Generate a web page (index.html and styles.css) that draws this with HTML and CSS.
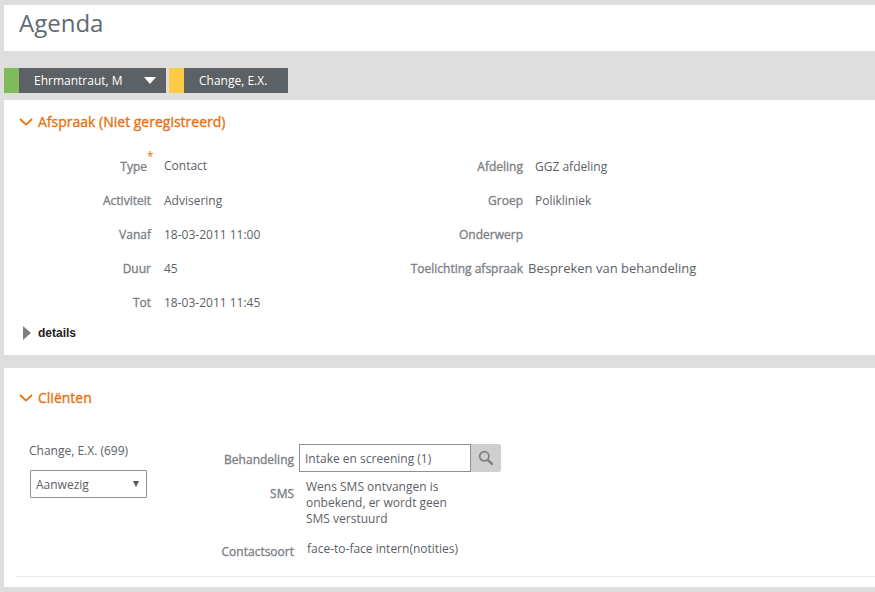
FILE: index.html
```html
<!DOCTYPE html>
<html lang="nl">
<head>
<meta charset="utf-8">
<title>Agenda</title>
<link rel="stylesheet" href="styles.css">
</head>
<body>
<header class="page-head"><h1>Agenda</h1></header>
<nav class="tabs">
  <div class="tab tab-first">
    <span class="swatch swatch-green"></span>
    <span class="tab-body tab-body-wide"><span>Ehrmantraut, M</span><span class="tab-caret"></span></span>
  </div>
  <div class="tab">
    <span class="swatch swatch-yellow"></span>
    <span class="tab-body tab-body-narrow">Change, E.X.</span>
  </div>
</nav>
<section class="panel panel-appt">
  <h2 class="panel-title">
    <svg class="chev" width="14" height="8" viewBox="0 0 14 8"><path d="M1 1l6 5.6L13 1" fill="none" stroke="#e8710f" stroke-width="1.8"/></svg>
    Afspraak (Niet geregistreerd)
  </h2>
  <div class="appt-grid">
    <div class="col col-left">
      <div class="row"><span class="lbl lbl-req">Type<span class="req">*</span></span><span class="val val-type">Contact</span></div>
      <div class="row"><span class="lbl">Activiteit</span><span class="val">Advisering</span></div>
      <div class="row"><span class="lbl">Vanaf</span><span class="val">18-03-2011 11:00</span></div>
      <div class="row"><span class="lbl">Duur</span><span class="val">45</span></div>
      <div class="row"><span class="lbl">Tot</span><span class="val">18-03-2011 11:45</span></div>
    </div>
    <div class="col col-right">
      <div class="row"><span class="lbl">Afdeling</span><span class="val">GGZ afdeling</span></div>
      <div class="row"><span class="lbl">Groep</span><span class="val">Polikliniek</span></div>
      <div class="row"><span class="lbl">Onderwerp</span><span class="val"></span></div>
      <div class="row"><span class="lbl">Toelichting afspraak</span><span class="val val-note">Bespreken van behandeling</span></div>
    </div>
  </div>
  <div class="details"><span class="details-arrow"></span><span class="details-text">details</span></div>
</section>
<section class="panel panel-clients">
  <h2 class="panel-title">
    <svg class="chev" width="14" height="8" viewBox="0 0 14 8"><path d="M1 1l6 5.6L13 1" fill="none" stroke="#e8710f" stroke-width="1.8"/></svg>
    Cliënten
  </h2>
  <div class="client">
    <div class="client-side">
      <div class="client-name">Change, E.X. (699)</div>
      <div class="select"><span>Aanwezig</span><span class="select-caret"></span></div>
    </div>
    <div class="client-main">
      <div class="crow crow-treat">
        <span class="lbl clbl">Behandeling</span>
        <div class="lookup">
          <span class="lookup-input">Intake en screening (1)</span>
          <span class="lookup-btn">
            <svg width="16" height="16" viewBox="0 0 16 16"><circle cx="6.3" cy="6.3" r="4.6" fill="none" stroke="#7d8184" stroke-width="1.8"/><path d="M9.8 9.8l4.8 4.8" stroke="#7d8184" stroke-width="2.4"/></svg>
          </span>
        </div>
      </div>
      <div class="crow crow-sms">
        <span class="lbl clbl">SMS</span>
        <span class="sms-text">Wens SMS ontvangen is onbekend, er wordt geen SMS verstuurd</span>
      </div>
      <div class="crow crow-kind">
        <span class="lbl clbl">Contactsoort</span>
        <span class="kind-text">face-to-face intern(notities)</span>
      </div>
    </div>
  </div>
  <div class="divider"></div>
</section>
</body>
</html>
```
FILE: styles.css
```css
* { box-sizing: border-box; }
html, body { height: 100%; }
body {
  margin: 0;
  padding: 5px 0 0 4px;
  height: 592px;
  overflow: hidden;
  background: #dedede;
  font-family: "Open Sans", sans-serif;
  font-size: 12px;
  color: #5c6166;
}
.page-head {
  height: 46px;
  background: #fff;
  padding-left: 15px;
}
.page-head h1 {
  margin: 0;
  font-size: 24px;
  line-height: 35px;
  font-weight: 400;
  color: #5f6a75;
}
.tabs {
  display: flex;
  gap: 3px;
  margin-top: 17px;
  height: 25px;
}
.tab { display: flex; }
.swatch { width: 15px; height: 25px; }
.swatch-green { background: #7fbb5a; }
.swatch-yellow { background: #fccb46; }
.tab-body {
  display: flex;
  align-items: center;
  height: 25px;
  background: #5b6164;
  color: #fff;
  font-size: 12px;
}
.tab-body-wide { width: 147px; padding-left: 15px; justify-content: space-between; padding-right: 10px; }
.tab-body-narrow { width: 104px; padding-left: 15px; }
.tab-caret {
  width: 0;
  height: 0;
  border-left: 6px solid transparent;
  border-right: 6px solid transparent;
  border-top: 7px solid #fff;
}
.panel { background: #fff; }
.panel-appt { height: 255px; margin-top: 7px; padding-top: 12px; }
.panel-clients { height: 219px; margin-top: 13px; padding-top: 20px; }
.panel-title {
  display: flex;
  align-items: center;
  gap: 5px;
  margin: 0;
  padding-left: 15px;
  font-size: 14px;
  line-height: 19px;
  font-weight: 400;
  -webkit-text-stroke: 0.35px #e8710f;
  color: #e8710f;
}
.appt-grid {
  display: flex;
  margin-top: 25px;
}
.col { display: flex; flex-direction: column; gap: 14px; }
.col-left { width: 400px; }
.row { display: flex; align-items: center; height: 20px; }
.lbl {
  font-weight: 400;
  -webkit-text-stroke: 0.35px #7d8185;
  color: #7d8185;
  text-align: right;
  white-space: nowrap;
}
.col-left .lbl { width: 147px; }
.col-right .lbl { width: 119px; }
.val { color: #5c6166; white-space: nowrap; margin-left: 13px; }
.col-right .val { margin-left: 12px; }
.col-right .val-note { margin-left: 5px; font-size: 13px; }
.col-left .lbl-req { position: relative; width: 143px; margin-right: 4px; }
.req {
  position: absolute;
  left: 100%;
  top: -9px;
  color: #e8710f;
  -webkit-text-stroke: 0;
  font-weight: 400;
  font-size: 12px;
  line-height: 16px;
}
.val-type { position: relative; top: -1px; }
.details {
  display: flex;
  align-items: center;
  margin: 13px 0 0 19px;
  height: 16px;
}
.details-arrow {
  width: 0;
  height: 0;
  border-top: 7px solid transparent;
  border-bottom: 7px solid transparent;
  border-left: 8px solid #7d8185;
}
.details-text {
  margin-left: 7px;
  font-family: "Liberation Sans", sans-serif;
  font-size: 12px;
  font-weight: 700;
  color: #222;
}
.client { display: flex; margin-top: 36px; }
.client-side { width: 208px; padding: 0 0 0 25px; }
.client-name { line-height: 17px; margin-top: -1px; }
.select {
  display: flex;
  align-items: center;
  justify-content: space-between;
  width: 117px;
  height: 28px;
  margin: 11px 0 0 1px;
  padding: 0 7px 0 5px;
  border: 1px solid #8e8e8e;
  border-radius: 1px;
}
.select-caret {
  width: 0;
  height: 0;
  border-left: 3px solid transparent;
  border-right: 3px solid transparent;
  border-top: 6px solid #555;
}
.client-main { display: flex; flex-direction: column; margin-top: 1px; }
.crow { display: flex; }
.clbl { width: 82px; }
.crow-treat { align-items: center; height: 28px; }
.crow-treat .clbl { padding-top: 2px; }
.lookup { display: flex; margin-left: 5px; }
.lookup-input {
  width: 172px;
  height: 28px;
  line-height: 28px;
  padding-left: 5px;
  border: 1px solid #8e8e8e;
  white-space: nowrap;
}
.lookup-btn {
  display: flex;
  align-items: center;
  justify-content: center;
  width: 30px;
  height: 28px;
  background: #cfcfcf;
  border-radius: 0 2px 2px 0;
}
.crow-sms { margin-top: 7px; }
.crow-sms .clbl { line-height: 17px; margin-top: 6px; }
.sms-text { width: 160px; margin-left: 12px; line-height: 16px; }
.crow-kind { margin-top: 13px; }
.crow-kind .clbl { line-height: 17px; margin-top: 3px; }
.kind-text { margin-left: 13px; line-height: 17px; white-space: nowrap; }
.divider { height: 1px; margin: 16px 0 0 12px; background: #ebebeb; }
```
